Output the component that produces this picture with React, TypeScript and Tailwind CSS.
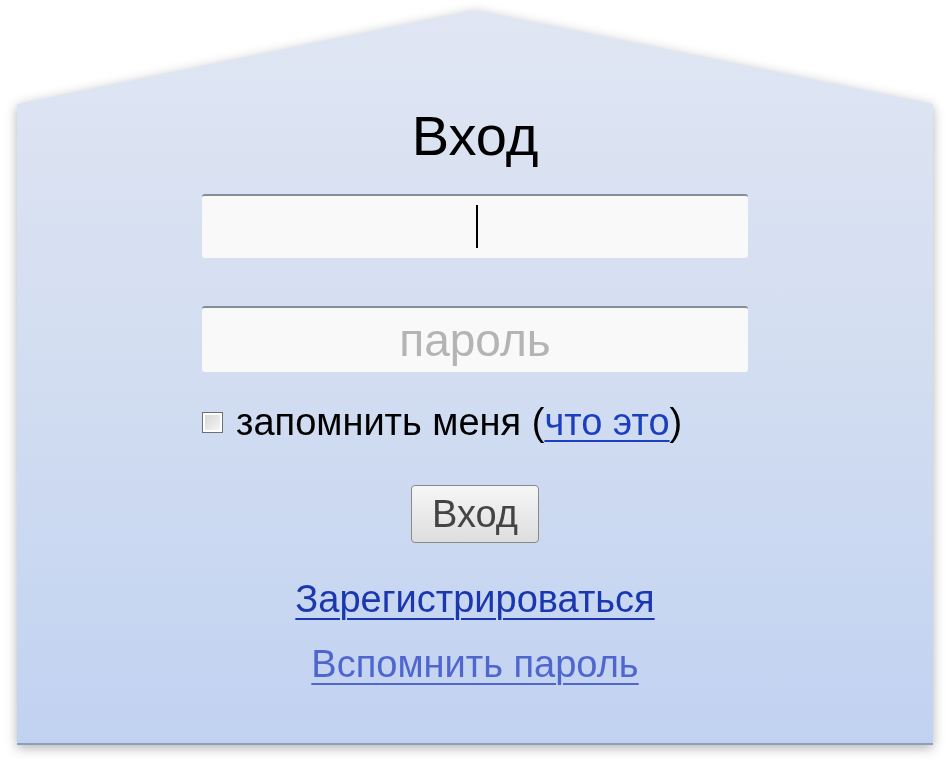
import React from 'react';

export default function App() {
    return (
        <div className="w-[950px] h-[770px] bg-white pt-[10px] pl-[17px] font-['Liberation_Sans',Arial,sans-serif]">
            <div className="w-[916px] h-[735px] [filter:drop-shadow(0_3px_6px_rgba(0,0,0,0.3))]">
                <div className="h-full flex flex-col items-center pt-[98px] bg-gradient-to-b from-[#e0e6f3] via-[#d2ddf1] to-[#c1d2f1] border-b-2 border-[#8e9dbb] [clip-path:polygon(50%_0,100%_94px,100%_100%,0_100%,0_94px)]">
                    <h1 className="text-[56px] leading-none text-black">Вход</h1>

                    <div className="relative mt-[30px]">
                        <input
                            type="text"
                            className="w-[546px] h-[64px] rounded-[3px] bg-[#f9f9f9] border-t-2 border-[#878d96] outline-none"
                        />
                        <span className="absolute left-[274px] top-[11px] w-[2px] h-[43px] bg-black" />
                    </div>

                    <input
                        type="password"
                        placeholder="пароль"
                        className="mt-[48px] w-[546px] h-[66px] rounded-[3px] bg-[#f9f9f9] border-t-2 border-[#878d96] outline-none text-center text-[46px] placeholder:text-[#b4b4b4]"
                    />

                    <div className="mt-[31px] w-[546px] flex items-center text-[38px] leading-none text-black">
                        <span className="w-[21px] h-[21px] border border-[#6f6f6f] p-[2px] bg-white mr-[13px]">
                            <span className="block w-full h-full bg-gradient-to-br from-[#d8d8d8] to-[#f4f4f4]" />
                        </span>
                        <span>
                            запомнить меня (<a href="#" className="text-[#1c3fc0] underline underline-offset-[5px] decoration-2">что это</a>)
                        </span>
                    </div>

                    <button className="mt-[44px] w-[128px] h-[58px] rounded-[4px] border border-[#8a8a8a] bg-gradient-to-b from-[#f6f6f6] to-[#dedede] text-[38px] text-[#444]">
                        Вход
                    </button>

                    <a href="#" className="mt-[37px] text-[38px] leading-none text-[#1a37b0] underline underline-offset-[6px] decoration-2">
                        Зарегистрироваться
                    </a>
                    <a href="#" className="mt-[27px] text-[38px] leading-none text-[#5066cf] underline underline-offset-[6px] decoration-2">
                        Вспомнить пароль
                    </a>
                </div>
            </div>
        </div>
    );
}
